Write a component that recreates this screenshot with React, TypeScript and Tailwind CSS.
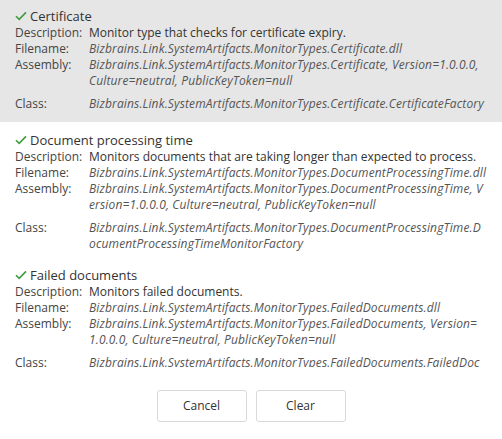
const monitors = [
  {
    title: 'Certificate',
    description: 'Monitor type that checks for certificate expiry.',
    filename: 'Bizbrains.Link.SystemArtifacts.MonitorTypes.Certificate.dll',
    assembly: ['Bizbrains.Link.SystemArtifacts.MonitorTypes.Certificate, Version=1.0.0.0,', 'Culture=neutral, PublicKeyToken=null'],
    className: ['Bizbrains.Link.SystemArtifacts.MonitorTypes.Certificate.CertificateFactory'],
    selected: true,
  },
  {
    title: 'Document processing time',
    description: 'Monitors documents that are taking longer than expected to process.',
    filename: 'Bizbrains.Link.SystemArtifacts.MonitorTypes.DocumentProcessingTime.dll',
    assembly: [
      'Bizbrains.Link.SystemArtifacts.MonitorTypes.DocumentProcessingTime, V',
      'ersion=1.0.0.0, Culture=neutral, PublicKeyToken=null',
    ],
    className: ['Bizbrains.Link.SystemArtifacts.MonitorTypes.DocumentProcessingTime.D', 'ocumentProcessingTimeMonitorFactory'],
    selected: false,
  },
  {
    title: 'Failed documents',
    description: 'Monitors failed documents.',
    filename: 'Bizbrains.Link.SystemArtifacts.MonitorTypes.FailedDocuments.dll',
    assembly: [
      'Bizbrains.Link.SystemArtifacts.MonitorTypes.FailedDocuments, Version=',
      '1.0.0.0, Culture=neutral, PublicKeyToken=null',
    ],
    className: ['Bizbrains.Link.SystemArtifacts.MonitorTypes.FailedDocuments.FailedDoc', 'umentsMonitorFactory'],
    selected: false,
  },
]

function Check() {
  return (
    <svg width="12" height="10" viewBox="0 0 12 10" className="mr-[3px] shrink-0">
      <path d="M1 5.2 L4.2 8.4 L11 1.4" fill="none" stroke="#3f9b3f" strokeWidth="1.6" />
    </svg>
  )
}

function Row({ label, lines, italic, gap }: { label: string; lines: string[]; italic?: boolean; gap?: boolean }) {
  return (
    <div className={`grid grid-cols-[74px_1fr] leading-[16px] ${gap ? 'mb-[7px]' : ''}`}>
      <div className="text-[#444]">{label}</div>
      <div className={italic ? 'italic tracking-[0.14px] text-[#555]' : 'text-[#333]'}>
        {lines.map((l, i) => (
          <div key={i} className="whitespace-nowrap">
            {l}
          </div>
        ))}
      </div>
    </div>
  )
}

export default function App() {
  return (
    <div
      className="flex h-[439px] w-[502px] flex-col bg-white text-[12px] text-[#333]"
      style={{ fontFamily: '"Open Sans", "Noto Sans", sans-serif' }}
    >
      <div className="h-[367px] overflow-hidden">
        {monitors.map((m) => (
          <div
            key={m.title}
            className={`px-[15px] pt-[7px] ${m.selected ? 'mb-[2px] bg-[#e6e6e6] pb-[10px]' : 'pb-[7px]'}`}
          >
            <div className="flex items-center text-[13px] leading-[18px] text-[#333]">
              <Check />
              {m.title}
            </div>
            <Row label="Description:" lines={[m.description]} />
            <Row label="Filename:" lines={[m.filename]} italic />
            <Row label="Assembly:" lines={m.assembly} italic gap={m.assembly.length > 1} />
            <Row label="Class:" lines={m.className} italic />
          </div>
        ))}
      </div>
      <div className="flex justify-center gap-[9px] pt-[23px]">
        <button className="h-[32px] w-[90px] rounded-[3px] border border-[#d9d9d9] bg-white text-[12px] text-[#333]">
          Cancel
        </button>
        <button className="h-[32px] w-[90px] rounded-[3px] border border-[#d9d9d9] bg-white text-[12px] text-[#333]">
          Clear
        </button>
      </div>
    </div>
  )
}
